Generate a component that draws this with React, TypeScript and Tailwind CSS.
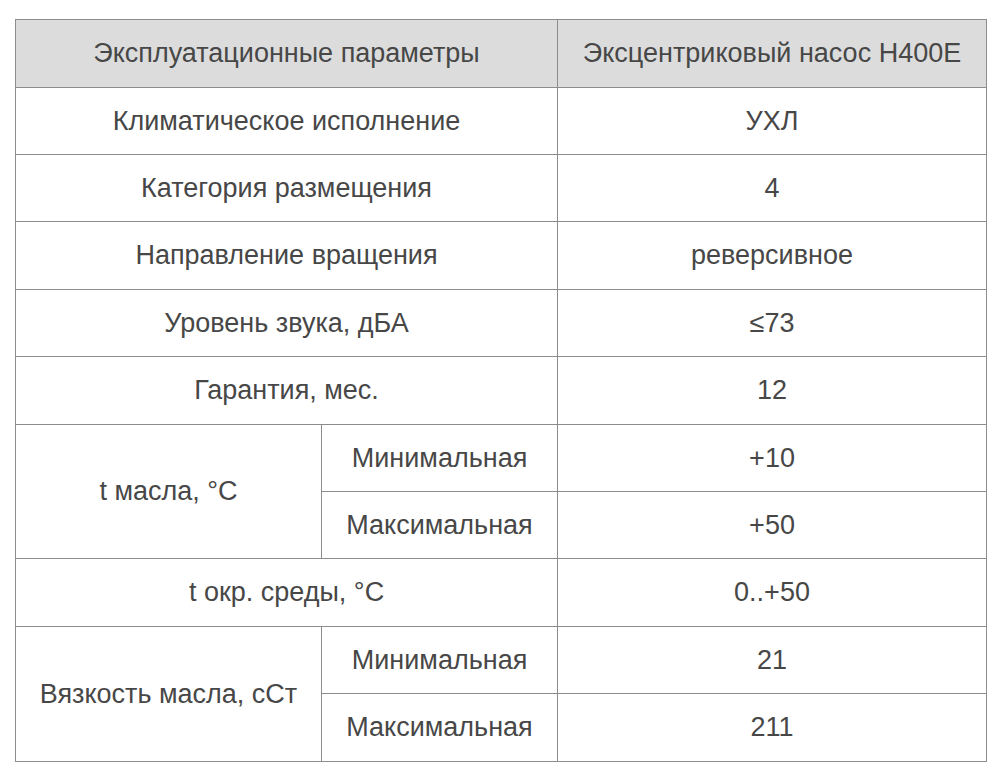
const rows: { label: string; value: string; tall?: boolean }[] = [
  { label: "Климатическое исполнение", value: "УХЛ" },
  { label: "Категория размещения", value: "4" },
  { label: "Направление вращения", value: "реверсивное", tall: true },
  { label: "Уровень звука, дБА", value: "≤73" },
  { label: "Гарантия, мес.", value: "12", tall: true },
];

const cell = "border border-[#8c8c8c] text-center align-middle";

export default function App() {
  return (
    <div className="min-h-[782px] bg-white pl-[15px] pt-[19px] font-['Liberation_Sans',Arial,sans-serif] text-[27px] text-[#474747]">
      <table className="w-[971px] table-fixed border-collapse">
        <colgroup>
          <col className="w-[306px]" />
          <col className="w-[236px]" />
          <col className="w-[429px]" />
        </colgroup>
        <tbody>
          <tr className="h-[68px] bg-[#dcdcdc]">
            <td colSpan={2} className={cell}>
              Эксплуатационные параметры
            </td>
            <td className={cell}>Эксцентриковый насос Н400Е</td>
          </tr>
          {rows.map((r) => (
            <tr key={r.label} className={r.tall ? "h-[68px]" : "h-[67px]"}>
              <td colSpan={2} className={cell}>
                {r.label}
              </td>
              <td className={cell}>{r.value}</td>
            </tr>
          ))}
          <tr className="h-[67px]">
            <td rowSpan={2} className={cell}>
              t масла, °C
            </td>
            <td className={cell}>Минимальная</td>
            <td className={cell}>+10</td>
          </tr>
          <tr className="h-[67px]">
            <td className={cell}>Максимальная</td>
            <td className={cell}>+50</td>
          </tr>
          <tr className="h-[68px]">
            <td colSpan={2} className={cell}>
              t окр. среды, °C
            </td>
            <td className={cell}>0..+50</td>
          </tr>
          <tr className="h-[67px]">
            <td rowSpan={2} className={cell}>
              Вязкость масла, сСт
            </td>
            <td className={cell}>Минимальная</td>
            <td className={cell}>21</td>
          </tr>
          <tr className="h-[68px]">
            <td className={cell}>Максимальная</td>
            <td className={cell}>211</td>
          </tr>
        </tbody>
      </table>
    </div>
  );
}
